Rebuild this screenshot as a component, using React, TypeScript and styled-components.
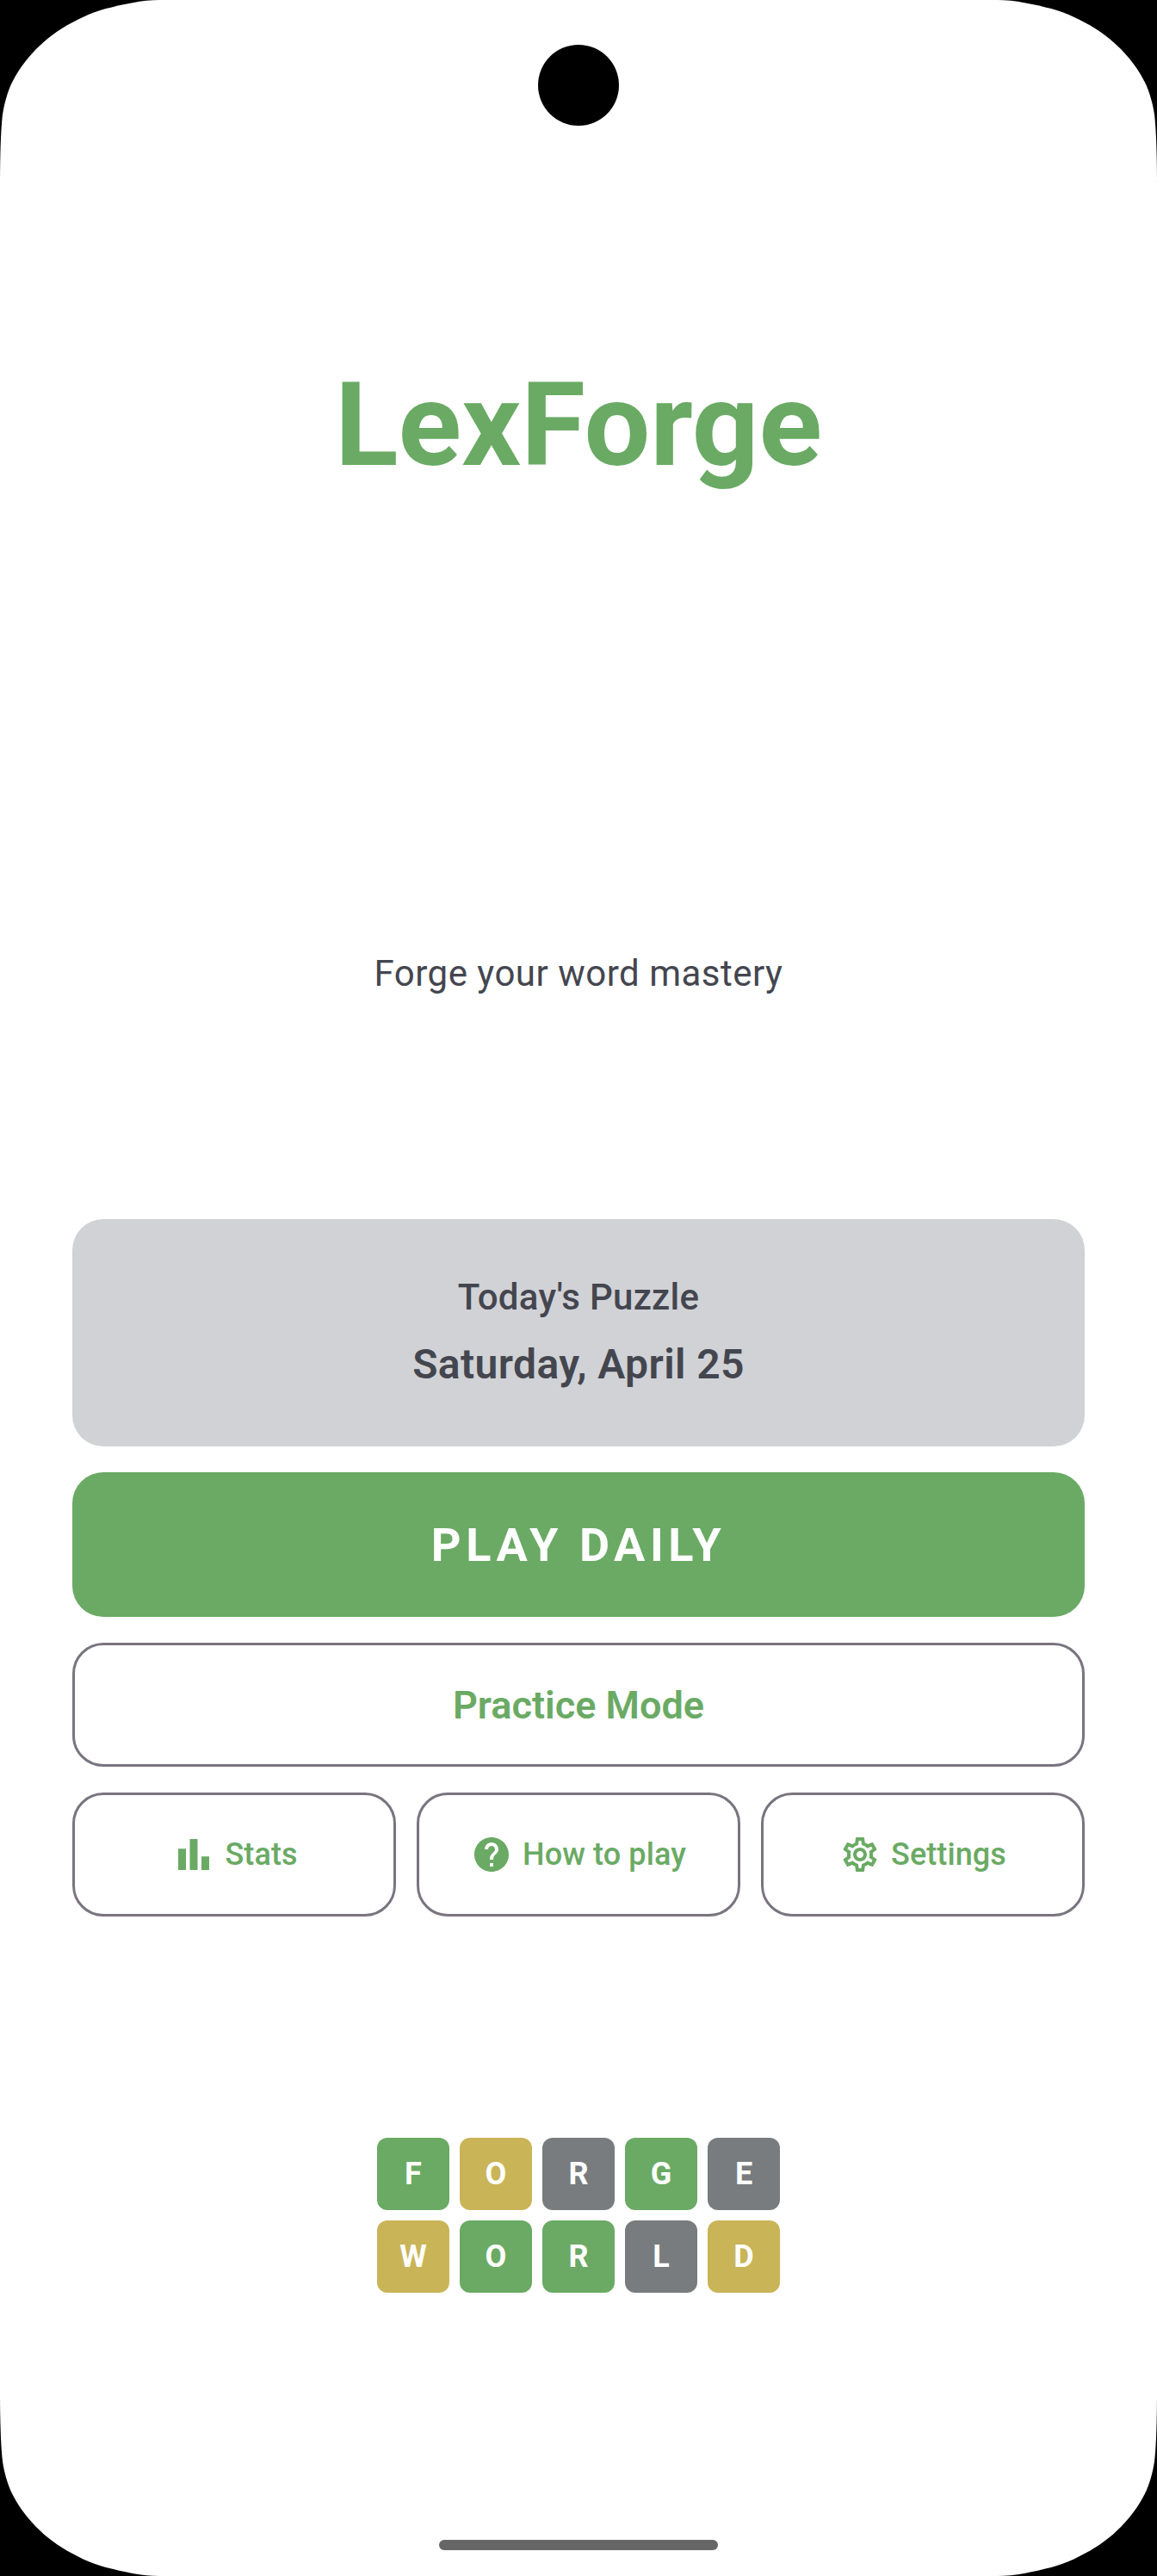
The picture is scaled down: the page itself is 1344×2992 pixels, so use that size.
import styled, { createGlobalStyle } from 'styled-components';
import { MdBarChart, MdHelp, MdOutlineSettings } from 'react-icons/md';

const GREEN = '#6AAA64';
const YELLOW = '#C9B458';
const GREY = '#787C7E';
const OUTLINE = '#79747E';
const INK = '#44464F';

const W = 1344;
const H = 2992;

// the display corners are not true circles, they have long thin tails
const screenShape = `M0 215
  C0 180 1 150 3 133 C5 120 8 110 12 100 C18 87 24 78 33 67 C44 54 56 43 72 33 C88 23 105 15 123 10 C143 5 165 0 185 0
  L${W - 185} 0
  C${W - 165} 0 ${W - 143} 5 ${W - 123} 10 C${W - 105} 15 ${W - 88} 23 ${W - 72} 33 C${W - 56} 43 ${W - 44} 54 ${W - 33} 67 C${W - 24} 78 ${W - 18} 87 ${W - 12} 100 C${W - 8} 110 ${W - 5} 120 ${W - 3} 133 C${W - 1} 150 ${W} 180 ${W} 215
  L${W} ${H - 215}
  C${W} ${H - 180} ${W - 1} ${H - 150} ${W - 3} ${H - 133} C${W - 5} ${H - 120} ${W - 8} ${H - 110} ${W - 12} ${H - 100} C${W - 18} ${H - 87} ${W - 24} ${H - 78} ${W - 33} ${H - 67} C${W - 44} ${H - 54} ${W - 56} ${H - 43} ${W - 72} ${H - 33} C${W - 88} ${H - 23} ${W - 105} ${H - 15} ${W - 123} ${H - 10} C${W - 143} ${H - 5} ${W - 165} ${H} ${W - 185} ${H}
  L185 ${H}
  C165 ${H} 143 ${H - 5} 123 ${H - 10} C105 ${H - 15} 88 ${H - 23} 72 ${H - 33} C56 ${H - 43} 44 ${H - 54} 33 ${H - 67} C24 ${H - 78} 18 ${H - 87} 12 ${H - 100} C8 ${H - 110} 5 ${H - 120} 3 ${H - 133} C1 ${H - 150} 0 ${H - 180} 0 ${H - 215}
  Z`.replace(/\s+/g, ' ');

const GlobalStyle = createGlobalStyle`
  html, body {
    margin: 0;
    background: #000;
  }
  * {
    box-sizing: border-box;
  }
`;

const Screen = styled.div`
  position: relative;
  width: ${W}px;
  height: ${H}px;
  padding: 420px 84px 0;
  background: #fff;
  clip-path: path('${screenShape}');
  overflow: hidden;
  display: flex;
  flex-direction: column;
  align-items: center;
  font-family: Roboto, sans-serif;
`;

const Camera = styled.div`
  position: absolute;
  top: 52px;
  left: 625px;
  width: 94px;
  height: 94px;
  border-radius: 50%;
  background: #000;
`;

const HomeBar = styled.div`
  position: absolute;
  top: 2950px;
  left: 510px;
  width: 324px;
  height: 12px;
  border-radius: 6px;
  background: #666;
`;

const Title = styled.h1`
  margin: 0;
  height: 148px;
  font-size: 136px;
  line-height: 148px;
  font-weight: 700;
  color: ${GREEN};
`;

const Tagline = styled.p`
  margin: 535px 0 0;
  height: 56px;
  font-size: 42px;
  line-height: 56px;
  letter-spacing: 0.5px;
  color: ${INK};
`;

const PuzzleCard = styled.div`
  width: 100%;
  height: 264px;
  margin-top: 257px;
  border-radius: 36px;
  background: #D1D2D6;
  color: ${INK};
  display: flex;
  flex-direction: column;
  align-items: center;
  justify-content: center;
  gap: 18px;
`;

const CardLabel = styled.div`
  font-size: 42px;
  line-height: 56px;
  font-weight: 500;
  letter-spacing: 0.3px;
`;

const CardDate = styled.div`
  font-size: 48px;
  line-height: 64px;
  font-weight: 600;
  letter-spacing: 0.4px;
`;

const PlayButton = styled.button`
  width: 100%;
  height: 168px;
  margin-top: 30px;
  border: 0;
  border-radius: 36px;
  background: ${GREEN};
  color: #fff;
  font-family: inherit;
  font-size: 54px;
  font-weight: 700;
  letter-spacing: 5.6px;
`;

const OutlineButton = styled.button`
  display: flex;
  align-items: center;
  justify-content: center;
  height: 144px;
  border: 3px solid ${OUTLINE};
  border-radius: 36px;
  background: #fff;
  color: ${GREEN};
  font-family: inherit;
`;

const PracticeButton = styled(OutlineButton)`
  width: 100%;
  margin-top: 30px;
  font-size: 45px;
  font-weight: 600;
`;

const ActionRow = styled.div`
  width: 100%;
  margin-top: 30px;
  display: grid;
  grid-template-columns: repeat(3, 1fr);
  gap: 24px;
`;

const ActionButton = styled(OutlineButton)<{ $gap: number }>`
  gap: ${({ $gap }) => $gap}px;
  font-size: 36px;
  font-weight: 500;
  letter-spacing: 0.1px;

  svg {
    flex: none;
  }
`;

const TileGrid = styled.div`
  margin-top: 257px;
  display: grid;
  grid-template-columns: repeat(5, 84px);
  grid-auto-rows: 84px;
  gap: 12px;
`;

const Tile = styled.div<{ $color: string }>`
  display: flex;
  align-items: center;
  justify-content: center;
  border-radius: 12px;
  background: ${({ $color }) => $color};
  color: #fff;
  font-size: 36px;
  font-weight: 700;
`;

const tiles: [string, string][] = [
  ['F', GREEN],
  ['O', YELLOW],
  ['R', GREY],
  ['G', GREEN],
  ['E', GREY],
  ['W', YELLOW],
  ['O', GREEN],
  ['R', GREEN],
  ['L', GREY],
  ['D', YELLOW],
];

const App = () => {
  return (
    <>
      <GlobalStyle />
      <Screen>
        <Camera />
        <Title>LexForge</Title>
        <Tagline>Forge your word mastery</Tagline>

        <PuzzleCard>
          <CardLabel>Today's Puzzle</CardLabel>
          <CardDate>Saturday, April 25</CardDate>
        </PuzzleCard>

        <PlayButton>PLAY DAILY</PlayButton>
        <PracticeButton>Practice Mode</PracticeButton>

        <ActionRow>
          <ActionButton $gap={9}>
            <MdBarChart size={54} />
            Stats
          </ActionButton>
          <ActionButton $gap={12}>
            <MdHelp size={48} />
            How to play
          </ActionButton>
          <ActionButton $gap={12}>
            <MdOutlineSettings size={48} />
            Settings
          </ActionButton>
        </ActionRow>

        <TileGrid>
          {tiles.map(([letter, color], i) => (
            <Tile key={i} $color={color}>
              {letter}
            </Tile>
          ))}
        </TileGrid>

        <HomeBar />
      </Screen>
    </>
  );
};

export default App;
